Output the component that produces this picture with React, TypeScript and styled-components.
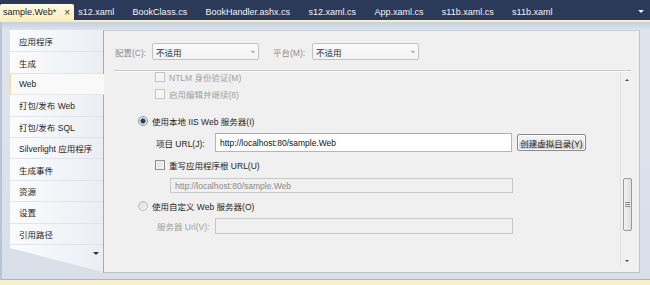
import React from "react";
import styled, { createGlobalStyle } from "styled-components";

const Global = createGlobalStyle`
  html, body { margin: 0; padding: 0; background: #2b3a58; }
  body { font-family: "Liberation Sans", "Noto Sans CJK SC", sans-serif; -webkit-font-smoothing: antialiased; }
  * { box-sizing: border-box; }
`;

const Window = styled.div`
  width: 650px;
  height: 285px;
  display: flex;
  flex-direction: column;
  overflow: hidden;
`;

/* ---------- document tab strip ---------- */
const TabBar = styled.div`
  height: 20px;
  flex-shrink: 0;
  background: #2b3a58;
  display: flex;
  align-items: flex-end;
  padding-right: 6px;
`;

const Tab = styled.div<{ $active?: boolean }>`
  height: 16px;
  display: flex;
  align-items: center;
  font-size: 9px;
  white-space: nowrap;
  color: ${(p) => (p.$active ? "#1b1b1b" : "#f2f4f8")};
  background: ${(p) => (p.$active ? "linear-gradient(#fffbe4, #fcefbd)" : "transparent")};
  border-radius: ${(p) => (p.$active ? "2px 2px 0 0" : "0")};
  padding: ${(p) => (p.$active ? "0 4px 0 3px" : "0 14.4px 0 4px")};
`;

const Close = styled.span`
  margin-left: 8px;
  font-size: 10px;
  color: #3c3c3c;
`;

const Spacer = styled.div`
  flex: 1;
`;

const DownTri = styled.div<{ $color?: string; $size?: number }>`
  width: 0;
  height: 0;
  border-left: ${(p) => p.$size ?? 3}px solid transparent;
  border-right: ${(p) => p.$size ?? 3}px solid transparent;
  border-top: ${(p) => p.$size ?? 3}px solid ${(p) => p.$color ?? "#444"};
`;

const UpTri = styled.div<{ $color?: string; $size?: number }>`
  width: 0;
  height: 0;
  border-left: ${(p) => p.$size ?? 3}px solid transparent;
  border-right: ${(p) => p.$size ?? 3}px solid transparent;
  border-bottom: ${(p) => p.$size ?? 3}px solid ${(p) => p.$color ?? "#444"};
`;

const TabMenu = styled.div`
  height: 16px;
  display: flex;
  align-items: center;
  padding-bottom: 2px;
`;

/* ---------- document frame ---------- */
const Frame = styled.div`
  flex: 1;
  display: flex;
  flex-direction: column;
  border-top: 2px solid #fbefbf;
  border-bottom: 5px solid #f6efcb;
  background: linear-gradient(#c6d0e0 0px, #d4dbe7 5px, #dfe4ec 8px, #d9dfe9 100%);
`;

const FrameInner = styled.div`
  flex: 1;
  display: flex;
  padding: 8px 10px 6px 8px;
  border-left: 2px solid #b9c4d6;
  border-bottom: 1px solid #a9b5c8;
`;

/* ---------- property page tabs (left) ---------- */
const Sidebar = styled.div`
  width: 93px;
  flex-shrink: 0;
  display: flex;
  flex-direction: column;
  background: linear-gradient(to right, #fbfcfd, #eaeef3);
  clip-path: polygon(0 0, calc(100% + 3px) 0, calc(100% + 3px) 100%, 0 calc(100% - 25px));
  padding-top: 1px;
`;

const SideItem = styled.div<{ $selected?: boolean }>`
  height: 21.4px;
  display: flex;
  align-items: center;
  padding-left: ${(p) => (p.$selected ? "8px" : "9px")};
  font-size: 8.5px;
  color: #1e1e1e;
  white-space: nowrap;
  border-bottom: 1px solid ${(p) => (p.$selected ? "#e8e8e8" : "#e1e5eb")};
  border-left: ${(p) => (p.$selected ? "1px solid #f1dc97" : "none")};
  background: ${(p) => (p.$selected ? "#f9f9f9" : "transparent")};
  position: relative;
  margin-right: ${(p) => (p.$selected ? "-1px" : "0")};
  z-index: ${(p) => (p.$selected ? 1 : 0)};
`;

const SideMore = styled.div`
  display: flex;
  justify-content: flex-end;
  padding: 7px 4px 0 0;
`;

/* ---------- page content ---------- */
const Panel = styled.div`
  flex: 1;
  display: flex;
  flex-direction: column;
  background: #f0f0f0;
  border-left: 1px solid #a4abb6;
  border-top: 1px solid #c9cfd8;
  border-right: 1px solid #bcc4cf;
  border-bottom: 1px solid #b6bec9;
`;

const ConfigRow = styled.div`
  display: flex;
  align-items: center;
  padding: 12px 0 0 11px;
  height: 29px;
`;

const DimLabel = styled.span<{ $w: number; $ml?: number }>`
  width: ${(p) => p.$w}px;
  margin-left: ${(p) => p.$ml ?? 0}px;
  font-size: 8.5px;
  color: #8e8e8e;
  white-space: nowrap;
`;

const Combo = styled.div`
  width: 107px;
  height: 17px;
  display: flex;
  align-items: center;
  justify-content: space-between;
  padding: 0 3px 0 3px;
  border: 1px solid #c3c3c3;
  border-radius: 2px;
  background: linear-gradient(#fafafa, #f2f2f2);
  font-size: 8.5px;
  color: #2a2a2a;
`;

const Separator = styled.div`
  margin: 10px 8px 0 10px;
  height: 2px;
  border-top: 1px solid #c9c9c9;
  border-bottom: 1px solid #fbfbfb;
`;

const ScrollArea = styled.div`
  height: 193px;
  margin-right: 6px;
  display: flex;
`;

const ScrollContent = styled.div`
  flex: 1;
  overflow: hidden;
  display: flex;
  flex-direction: column;
`;

const ScrollInner = styled.div`
  margin-top: -3px;
  display: flex;
  flex-direction: column;
`;

const Row = styled.div<{ $indent: number; $mt?: number; $h?: number }>`
  display: flex;
  align-items: center;
  padding-left: ${(p) => p.$indent}px;
  margin-top: ${(p) => p.$mt ?? 0}px;
  height: ${(p) => p.$h ?? 16}px;
  flex-shrink: 0;
`;

const Text = styled.span<{ $dim?: boolean; $w?: number }>`
  font-size: 8.5px;
  color: ${(p) => (p.$dim ? "#a2a2a2" : "#1e1e1e")};
  white-space: nowrap;
  width: ${(p) => (p.$w ? `${p.$w}px` : "auto")};
  flex-shrink: 0;
`;

const CheckBox = styled.span<{ $dim?: boolean }>`
  width: 10px;
  height: 10px;
  margin-right: 4px;
  flex-shrink: 0;
  border: 1px solid ${(p) => (p.$dim ? "#c4c4c4" : "#8e8f8f")};
  background: ${(p) =>
    p.$dim ? "#f4f4f4" : "linear-gradient(135deg, #dcdcdc, #f6f6f6)"};
  box-shadow: inset 0 0 0 1px ${(p) => (p.$dim ? "#f7f7f7" : "#f0f0f0")};
`;

const Radio = styled.span<{ $on?: boolean; $dim?: boolean }>`
  width: 10px;
  height: 10px;
  border-radius: 50%;
  margin-right: 4px;
  flex-shrink: 0;
  border: 1px solid ${(p) => (p.$dim ? "#bdbdbd" : "#8a8e94")};
  background: ${(p) =>
    p.$on
      ? "radial-gradient(circle, #27455f 0 2px, #6f8aa3 2.5px, #e8edf1 3px)"
      : "linear-gradient(135deg, #dadada, #f7f7f7)"};
`;

const Field = styled.div<{ $w: number; $h: number; $dim?: boolean }>`
  width: ${(p) => p.$w}px;
  height: ${(p) => p.$h}px;
  flex-shrink: 0;
  display: flex;
  align-items: center;
  padding-left: 4px;
  font-size: 8.5px;
  color: ${(p) => (p.$dim ? "#8a8a8a" : "#111")};
  background: ${(p) => (p.$dim ? "#f0f0f0" : "#ffffff")};
  border: 1px solid ${(p) => (p.$dim ? "#c8c8c8" : "#b3b6bb")};
  border-top-color: ${(p) => (p.$dim ? "#c8c8c8" : "#a9acb2")};
  white-space: nowrap;
`;

const Button = styled.div`
  width: 69px;
  height: 17px;
  margin-left: 5px;
  flex-shrink: 0;
  display: flex;
  align-items: center;
  justify-content: center;
  font-size: 8.5px;
  color: #222;
  border: 1px solid #8a8a8a;
  border-radius: 2px;
  background: linear-gradient(#f5f5f5 0%, #eaeaea 50%, #dcdcdc 51%, #d2d2d2 100%);
  box-shadow: inset 0 0 0 1px #fbfbfb;
`;

const ScrollBar = styled.div`
  width: 13px;
  flex-shrink: 0;
  display: flex;
  flex-direction: column;
  align-items: center;
  border-left: 1px solid #e2e2e2;
  background: #f1f1f1;
  padding: 7px 0 3px 0;
`;

const ScrollTrack = styled.div`
  flex: 1;
  width: 100%;
  display: flex;
  flex-direction: column;
  align-items: center;
  padding-top: 97px;
`;

const Thumb = styled.div`
  width: 9px;
  height: 53px;
  border: 1px solid #9a9a9a;
  border-radius: 2px;
  background: linear-gradient(to right, #f3f3f3, #dedede);
  display: flex;
  flex-direction: column;
  align-items: center;
  justify-content: center;
  gap: 1px;
`;

const Grip = styled.div`
  width: 5px;
  height: 1px;
  background: #8a8a8a;
`;

const tabs = [
  "s12.xaml",
  "BookClass.cs",
  "BookHandler.ashx.cs",
  "s12.xaml.cs",
  "App.xaml.cs",
  "s11b.xaml.cs",
  "s11b.xaml",
];

const pages = [
  "应用程序",
  "生成",
  "Web",
  "打包/发布 Web",
  "打包/发布 SQL",
  "Silverlight 应用程序",
  "生成事件",
  "资源",
  "设置",
  "引用路径",
];

export default function App() {
  return (
    <Window>
      <Global />
      <TabBar>
        <Tab $active>
          sample.Web*<Close>×</Close>
        </Tab>
        {tabs.map((t) => (
          <Tab key={t}>{t}</Tab>
        ))}
        <Spacer />
        <TabMenu>
          <DownTri $color="#e8ecf3" $size={3} />
        </TabMenu>
      </TabBar>
      <Frame>
        <FrameInner>
          <Sidebar>
            {pages.map((p) => (
              <SideItem key={p} $selected={p === "Web"}>
                {p}
              </SideItem>
            ))}
            <SideMore>
              <DownTri $color="#333" $size={3} />
            </SideMore>
          </Sidebar>
          <Panel>
            <ConfigRow>
              <DimLabel $w={37}>配置(C):</DimLabel>
              <Combo>
                不适用
                <DownTri $color="#9a9a9a" $size={2.5} />
              </Combo>
              <DimLabel $w={39} $ml={14}>
                平台(M):
              </DimLabel>
              <Combo>
                不适用
                <DownTri $color="#9a9a9a" $size={2.5} />
              </Combo>
            </ConfigRow>
            <Separator />
            <ScrollArea>
              <ScrollContent>
                <ScrollInner>
                  <Row $indent={51}>
                    <CheckBox $dim />
                    <Text $dim>NTLM 身份验证(M)</Text>
                  </Row>
                  <Row $indent={51} $mt={1}>
                    <CheckBox $dim />
                    <Text $dim>启用编辑并继续(8)</Text>
                  </Row>
                  <Row $indent={34} $mt={11}>
                    <Radio $on />
                    <Text>使用本地 IIS Web 服务器(I)</Text>
                  </Row>
                  <Row $indent={52} $mt={4} $h={19}>
                    <Text $w={59}>项目 URL(J):</Text>
                    <Field $w={297} $h={19}>
                      http://localhost:80/sample.Web
                    </Field>
                    <Button>创建虚拟目录(Y)</Button>
                  </Row>
                  <Row $indent={51} $mt={5}>
                    <CheckBox />
                    <Text>重写应用程序根 URL(U)</Text>
                  </Row>
                  <Row $indent={66} $mt={5} $h={15}>
                    <Field $w={343} $h={15} $dim>
                      http://localhost:80/sample.Web
                    </Field>
                  </Row>
                  <Row $indent={34} $mt={5}>
                    <Radio $dim />
                    <Text>使用自定义 Web 服务器(O)</Text>
                  </Row>
                  <Row $indent={53} $mt={4}>
                    <Text $dim $w={58}>
                      服务器 Url(V):
                    </Text>
                    <Field $w={298} $h={16} $dim />
                  </Row>
                </ScrollInner>
              </ScrollContent>
              <ScrollBar>
                <UpTri $color="#4a4a4a" $size={2.5} />
                <ScrollTrack>
                  <Thumb>
                    <Grip />
                    <Grip />
                    <Grip />
                  </Thumb>
                </ScrollTrack>
                <DownTri $color="#4a4a4a" $size={2.5} />
              </ScrollBar>
            </ScrollArea>
          </Panel>
        </FrameInner>
      </Frame>
    </Window>
  );
}
